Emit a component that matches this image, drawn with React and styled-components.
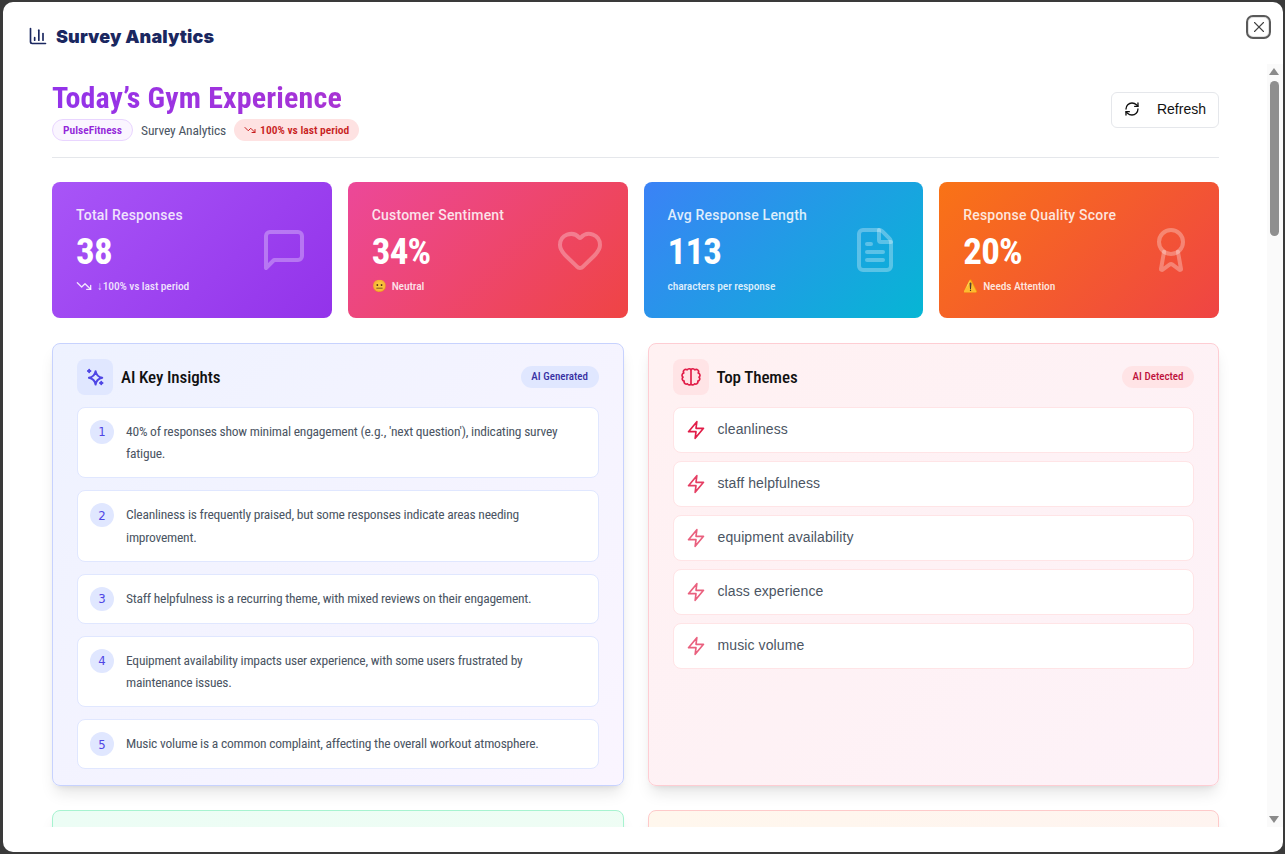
import React from 'react';
import styled, { createGlobalStyle, css } from 'styled-components';
import {
  ChartColumn, X, RefreshCw, TrendingDown, Heart, FileText, Award,
} from 'lucide-react';

const condensed = `"Roboto Condensed", Roboto, "Liberation Sans", Arial, sans-serif`;
const grotesk = `"Liberation Sans", Arial, sans-serif`;

const Global = createGlobalStyle`
  html, body { margin: 0; height: 100%; background: #3a3a3a; overflow: hidden; }
  #root { height: 100%; }
  * { box-sizing: border-box; }
`;

const Screen = styled.div`
  height: 854px;
  padding: 2px 2px 2px 3px;
`;

const Dialog = styled.div`
  position: relative;
  height: 100%;
  background: #fff;
  border-radius: 10px;
  display: flex;
  flex-direction: column;
  overflow: hidden;
  padding-bottom: 25px;
`;

const CloseButton = styled.button`
  position: absolute;
  top: 15px;
  right: 14px;
  width: 21px;
  height: 20px;
  padding: 0;
  display: flex;
  align-items: center;
  justify-content: center;
  background: #fff;
  border: 1px solid #e2e2e2;
  outline: 2px solid #5a5a5a;
  border-radius: 5px;
  color: #444;
`;

const TopBar = styled.header`
  height: 62px;
  flex: none;
  display: flex;
  align-items: center;
  gap: 8px;
  padding: 6px 25px 0;
  color: #1a2760;
`;

const AppName = styled.h1`
  margin: 0;
  font: 900 18px Inter, sans-serif;
  letter-spacing: 0.1px;
`;

const Scroller = styled.main`
  flex: 1;
  min-height: 0;
  overflow-y: auto;
  scrollbar-width: none;
  padding: 15px 64px 24px 49px;
`;

/* drawn rail: sits over the right edge of the dialog */
const ScrollRail = styled.div`
  position: absolute;
  top: 62px;
  right: 0;
  bottom: 25px;
  width: 16px;
  background: #fafafa;
  display: flex;
  flex-direction: column;
  align-items: center;
  padding: 4px 0;
`;

const RailArrow = styled.span`
  width: 0;
  height: 0;
  margin-right: 2px;
  border-left: 5px solid transparent;
  border-right: 5px solid transparent;
  ${(p) => (p.$down ? 'border-top: 7px solid #8a8a8a; margin-top: auto;' : 'border-bottom: 7px solid #8a8a8a;')}
`;

const RailThumb = styled.span`
  width: 9px;
  height: 155px;
  margin: 6px 2px 0 0;
  border-radius: 5px;
  background: #8f8f8f;
`;

const PageHead = styled.section`
  display: flex;
  justify-content: space-between;
  align-items: center;
  padding-bottom: 16px;
  border-bottom: 1px solid #e5e7eb;
  margin-bottom: 24px;
`;

const PageTitle = styled.h2`
  margin: 0 0 2px;
  font: 700 30px/38px ${condensed};
  letter-spacing: 0.14px;
  background: linear-gradient(90deg, #9333ea, #a833d4);
  -webkit-background-clip: text;
  background-clip: text;
  color: transparent;
  width: max-content;
`;

const MetaRow = styled.div`
  display: flex;
  align-items: center;
  gap: 8px;
`;

const Pill = styled.span`
  display: inline-flex;
  align-items: center;
  gap: 4px;
  height: 22px;
  padding: 0 10px;
  border-radius: 999px;
  font: 600 11.5px ${condensed};
  ${(p) => p.$tone === 'brand' && css`
    background: #faf5ff;
    border: 1px solid #e9d5ff;
    color: #9326d9;
  `}
  ${(p) => p.$tone === 'down' && css`
    background: #fee2e2;
    color: #c81e1e;
  `}
`;

const MetaText = styled.span`
  font: 400 13.5px ${condensed};
  letter-spacing: -0.15px;
  color: #4b5563;
`;

const RefreshButton = styled.button`
  width: 108px;
  height: 36px;
  display: flex;
  align-items: center;
  gap: 17px;
  padding: 0 12px 2px;
  background: #fff;
  border: 1px solid #e5e7eb;
  border-radius: 6px;
  font: 400 14px ${grotesk};
  color: #111;
`;

const StatGrid = styled.section`
  display: grid;
  grid-template-columns: repeat(4, 1fr);
  gap: 16px;
  margin-bottom: 24.6px;
`;

const StatCard = styled.article`
  height: 136px;
  padding: 24px 24px 26px;
  border-radius: 8px;
  color: #fff;
  display: flex;
  align-items: center;
  justify-content: space-between;
  background: linear-gradient(135deg, ${(p) => p.$from}, ${(p) => p.$to});
`;

const StatLabel = styled.div`
  font: 500 14px/20px Roboto, sans-serif;
  letter-spacing: 0.2px;
  color: rgba(255, 255, 255, 0.85);
  margin-bottom: 7px;
`;

const StatValue = styled.div`
  font: 700 37px/40px ${condensed};
  letter-spacing: -0.8px;
  margin-bottom: 6px;
`;

const StatNote = styled.div`
  display: flex;
  align-items: center;
  gap: 5px;
  font: 500 11.5px/16px ${condensed};
  letter-spacing: -0.12px;
  color: rgba(255, 255, 255, 0.85);
`;

const StatIcon = styled.div`
  color: rgba(255, 255, 255, 0.3);
  display: flex;
  margin-bottom: -2px;
`;

const PanelGrid = styled.section`
  display: grid;
  grid-template-columns: repeat(2, 1fr);
  gap: 24px;
`;

const tones = {
  indigo: { bg: 'linear-gradient(135deg, #eef2ff, #faf5ff)', border: '#c7d2fe', soft: '#e0e7ff', ink: '#4f46e5' },
  rose: { bg: 'linear-gradient(135deg, #fff1f2, #fdf2f8)', border: '#fecdd3', soft: '#ffe4e6', ink: '#e11d48' },
  green: { bg: 'linear-gradient(135deg, #ecfdf5, #f0fdf4)', border: '#a7f3d0', soft: '#d1fae5', ink: '#059669' },
  orange: { bg: 'linear-gradient(135deg, #fff7ed, #fef2f2)', border: '#fecaca', soft: '#ffedd5', ink: '#ea580c' },
};

const Panel = styled.article`
  min-height: ${(p) => p.$tall || 0}px;
  padding: 15px 24px 16px;
  border-radius: 8px;
  background: ${(p) => tones[p.$tone].bg};
  border: 1px solid ${(p) => tones[p.$tone].border};
  box-shadow: 0 10px 15px -3px rgba(0, 0, 0, 0.1), 0 4px 6px -4px rgba(0, 0, 0, 0.1);
`;

const PanelHead = styled.div`
  display: flex;
  align-items: center;
  justify-content: space-between;
  margin-bottom: 12px;
`;

const PanelTitleWrap = styled.div`
  display: flex;
  align-items: center;
  gap: 8px;
`;

const PanelIcon = styled.div`
  width: 36px;
  height: 36px;
  border-radius: 8px;
  display: flex;
  align-items: center;
  justify-content: center;
  background: ${(p) => tones[p.$tone].soft};
  color: ${(p) => tones[p.$tone].ink};
`;

const PanelTitle = styled.h3`
  margin: 0;
  font: 500 17px ${condensed};
  letter-spacing: -0.1px;
  color: #111;
`;

const TagPill = styled.span`
  height: 22px;
  padding: 0 10.5px;
  display: inline-flex;
  align-items: center;
  border-radius: 999px;
  font: 500 11px ${condensed};
  background: ${(p) => tones[p.$tone].soft};
  color: ${(p) => (p.$tone === 'rose' ? '#be123c' : '#3730a3')};
`;

const List = styled.div`
  display: flex;
  flex-direction: column;
  gap: ${(p) => p.$gap}px;
`;

const InsightItem = styled.div`
  display: flex;
  align-items: flex-start;
  gap: 12px;
  padding: 12px;
  background: #fff;
  border: 1px solid #e0e7ff;
  border-radius: 8px;
`;

const InsightNumber = styled.span`
  flex: none;
  width: 24px;
  height: 24px;
  border-radius: 50%;
  display: flex;
  align-items: center;
  justify-content: center;
  background: #e0e7ff;
  color: #4f46e5;
  font: 500 13px "DejaVu Sans Condensed", ${condensed};
`;

const InsightText = styled.p`
  margin: 0;
  font: 400 13.5px/22.75px ${condensed};
  letter-spacing: -0.22px;
  color: #4b5563;
`;

const ThemeItem = styled.div`
  display: flex;
  align-items: center;
  gap: 12px;
  padding: 12px;
  background: #fff;
  border: 1px solid #ffe4e6;
  border-radius: 8px;
  font: 400 14px/18px ${grotesk};
  letter-spacing: 0.1px;
  color: #4b5563;
`;

const ThemeText = styled.span`
  margin-bottom: 2px;
`;

const BoltSvg = styled.svg`
  flex: none;
  color: #e11d48;
  opacity: ${(p) => p.$fade};
`;

const Bolt = ({ fade }) => (
  <BoltSvg $fade={fade} width="20" height="20" viewBox="0 0 24 24" fill="none" stroke="currentColor" strokeWidth="2" strokeLinejoin="round">
    <polygon points="13 2 3 14 12 14 11 22 21 10 12 10 13 2" />
  </BoltSvg>
);

const Spark = () => (
  <svg width="20" height="20" viewBox="0 0 24 24" fill="none" stroke="currentColor" strokeWidth="2.4" strokeLinecap="round" strokeLinejoin="round">
    <path d="M12.7 5C13.5 9.8 15.8 12.1 20.7 13C15.8 13.9 13.5 16.2 12.7 21C11.9 16.2 9.6 13.9 4.7 13C9.6 12.1 11.9 9.8 12.7 5Z" />
    <path d="M5 3.2v3M3.5 4.7h3M19.5 17.7v3M18 19.2h3" />
  </svg>
);

const BrainOutline = () => (
  <svg width="20" height="20" viewBox="0 0 24 24" fill="none" stroke="currentColor" strokeWidth="2" strokeLinecap="round" strokeLinejoin="round">
    <path d="M12 3.2A2.8 2.8 0 0 1 16.6 3.4A2.8 2.8 0 0 1 20.6 7.2A2.8 2.8 0 0 1 21.6 12.2A2.8 2.8 0 0 1 20.2 17A2.8 2.8 0 0 1 16.2 20.2A2.8 2.8 0 0 1 12 20.8A2.8 2.8 0 0 1 7.8 20.2A2.8 2.8 0 0 1 3.8 17A2.8 2.8 0 0 1 2.4 12.2A2.8 2.8 0 0 1 3.4 7.2A2.8 2.8 0 0 1 7.4 3.4A2.8 2.8 0 0 1 12 3.2Z" />
    <path d="M12 3.2V20.8" />
  </svg>
);

const SpeechBubble = ({ size }) => (
  <svg width={size} height={size} viewBox="0 0 24 24" fill="none" stroke="currentColor" strokeWidth="2" strokeLinecap="round" strokeLinejoin="round">
    <path d="M21 15a2 2 0 0 1-2 2H7l-4 4V5a2 2 0 0 1 2-2h14a2 2 0 0 1 2 2z" />
  </svg>
);

const Emoji = styled.span`
  font-size: 12px;
`;

const stats = [
  { label: 'Total Responses', value: '38', from: '#a855f7', to: '#9333ea', Icon: SpeechBubble,
    note: <><TrendingDown size={16} /> ↓100% vs last period</> },
  { label: 'Customer Sentiment', value: '34%', from: '#ec4899', to: '#ef4444', Icon: Heart,
    note: <><Emoji>😐</Emoji> Neutral</> },
  { label: 'Avg Response Length', value: '113', from: '#3b82f6', to: '#06b6d4', Icon: FileText,
    note: 'characters per response' },
  { label: 'Response Quality Score', value: '20%', from: '#f97316', to: '#ef4444', Icon: Award,
    note: <><Emoji>⚠️</Emoji> Needs Attention</> },
];

const insights = [
  "40% of responses show minimal engagement (e.g., 'next question'), indicating survey fatigue.",
  'Cleanliness is frequently praised, but some responses indicate areas needing improvement.',
  'Staff helpfulness is a recurring theme, with mixed reviews on their engagement.',
  'Equipment availability impacts user experience, with some users frustrated by maintenance issues.',
  'Music volume is a common complaint, affecting the overall workout atmosphere.',
];

const themes = ['cleanliness', 'staff helpfulness', 'equipment availability', 'class experience', 'music volume'];
const boltFade = [1, 0.85, 0.7, 0.7, 0.7];

export default function App() {
  return (
    <Screen>
      <Global />
      <Dialog>
        <TopBar>
          <ChartColumn size={20} />
          <AppName>Survey Analytics</AppName>
        </TopBar>
        <CloseButton aria-label="Close"><X size={18} strokeWidth={1.5} /></CloseButton>
        <Scroller>
          <PageHead>
            <div>
              <PageTitle>Today’s Gym Experience</PageTitle>
              <MetaRow>
                <Pill $tone="brand">PulseFitness</Pill>
                <MetaText>Survey Analytics</MetaText>
                <Pill $tone="down"><TrendingDown size={12} /> 100% vs last period</Pill>
              </MetaRow>
            </div>
            <RefreshButton><RefreshCw size={16} /> Refresh</RefreshButton>
          </PageHead>

          <StatGrid>
            {stats.map(({ label, value, from, to, Icon, note }) => (
              <StatCard key={label} $from={from} $to={to}>
                <div>
                  <StatLabel>{label}</StatLabel>
                  <StatValue>{value}</StatValue>
                  <StatNote>{note}</StatNote>
                </div>
                <StatIcon><Icon size={48} /></StatIcon>
              </StatCard>
            ))}
          </StatGrid>

          <PanelGrid>
            <Panel $tone="indigo">
              <PanelHead>
                <PanelTitleWrap>
                  <PanelIcon $tone="indigo"><Spark /></PanelIcon>
                  <PanelTitle>AI Key Insights</PanelTitle>
                </PanelTitleWrap>
                <TagPill $tone="indigo">AI Generated</TagPill>
              </PanelHead>
              <List $gap={12}>
                {insights.map((text, i) => (
                  <InsightItem key={i}>
                    <InsightNumber>{i + 1}</InsightNumber>
                    <InsightText>{text}</InsightText>
                  </InsightItem>
                ))}
              </List>
            </Panel>

            <Panel $tone="rose">
              <PanelHead>
                <PanelTitleWrap>
                  <PanelIcon $tone="rose"><BrainOutline /></PanelIcon>
                  <PanelTitle>Top Themes</PanelTitle>
                </PanelTitleWrap>
                <TagPill $tone="rose">AI Detected</TagPill>
              </PanelHead>
              <List $gap={8}>
                {themes.map((theme, i) => (
                  <ThemeItem key={theme}>
                    <Bolt fade={boltFade[i]} />
                    <ThemeText>{theme}</ThemeText>
                  </ThemeItem>
                ))}
              </List>
            </Panel>

            <Panel $tone="green" $tall={400} />
            <Panel $tone="orange" $tall={400} />
          </PanelGrid>
        </Scroller>
        <ScrollRail>
          <RailArrow />
          <RailThumb />
          <RailArrow $down />
        </ScrollRail>
      </Dialog>
    </Screen>
  );
}
